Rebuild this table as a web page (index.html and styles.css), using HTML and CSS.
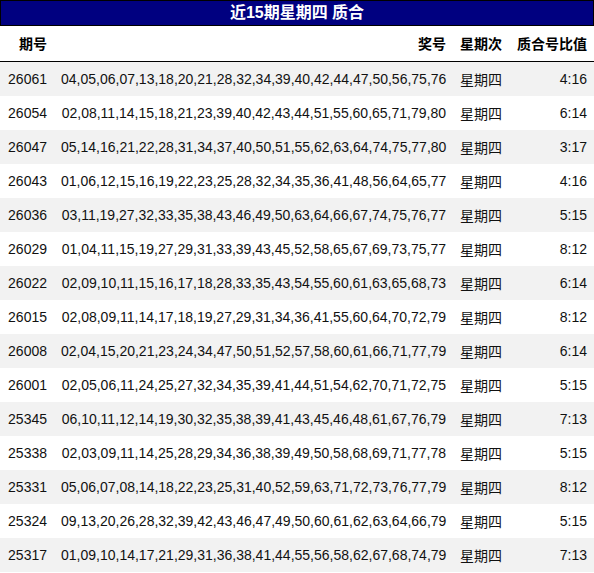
FILE: index.html
```html
<!DOCTYPE html>
<html lang="zh">
<head>
<meta charset="utf-8">
<title>近15期星期四 质合</title>
<link rel="stylesheet" href="styles.css">
</head>
<body>
<div class="title">近15期星期四 质合</div>
<table class="grid">
<colgroup><col class="c1"><col class="c2"><col class="c3"><col class="c4"></colgroup>
<thead>
<tr><th>期号</th><th>奖号</th><th>星期次</th><th>质合号比值</th></tr>
</thead>
<tbody>
<tr><td>26061</td><td>04,05,06,07,13,18,20,21,28,32,34,39,40,42,44,47,50,56,75,76</td><td class="wd">星期四</td><td>4:16</td></tr>
<tr><td>26054</td><td>02,08,11,14,15,18,21,23,39,40,42,43,44,51,55,60,65,71,79,80</td><td class="wd">星期四</td><td>6:14</td></tr>
<tr><td>26047</td><td>05,14,16,21,22,28,31,34,37,40,50,51,55,62,63,64,74,75,77,80</td><td class="wd">星期四</td><td>3:17</td></tr>
<tr><td>26043</td><td>01,06,12,15,16,19,22,23,25,28,32,34,35,36,41,48,56,64,65,77</td><td class="wd">星期四</td><td>4:16</td></tr>
<tr><td>26036</td><td>03,11,19,27,32,33,35,38,43,46,49,50,63,64,66,67,74,75,76,77</td><td class="wd">星期四</td><td>5:15</td></tr>
<tr><td>26029</td><td>01,04,11,15,19,27,29,31,33,39,43,45,52,58,65,67,69,73,75,77</td><td class="wd">星期四</td><td>8:12</td></tr>
<tr><td>26022</td><td>02,09,10,11,15,16,17,18,28,33,35,43,54,55,60,61,63,65,68,73</td><td class="wd">星期四</td><td>6:14</td></tr>
<tr><td>26015</td><td>02,08,09,11,14,17,18,19,27,29,31,34,36,41,55,60,64,70,72,79</td><td class="wd">星期四</td><td>8:12</td></tr>
<tr><td>26008</td><td>02,04,15,20,21,23,24,34,47,50,51,52,57,58,60,61,66,71,77,79</td><td class="wd">星期四</td><td>6:14</td></tr>
<tr><td>26001</td><td>02,05,06,11,24,25,27,32,34,35,39,41,44,51,54,62,70,71,72,75</td><td class="wd">星期四</td><td>5:15</td></tr>
<tr><td>25345</td><td>06,10,11,12,14,19,30,32,35,38,39,41,43,45,46,48,61,67,76,79</td><td class="wd">星期四</td><td>7:13</td></tr>
<tr><td>25338</td><td>02,03,09,11,14,25,28,29,34,36,38,39,49,50,58,68,69,71,77,78</td><td class="wd">星期四</td><td>5:15</td></tr>
<tr><td>25331</td><td>05,06,07,08,14,18,22,23,25,31,40,52,59,63,71,72,73,76,77,79</td><td class="wd">星期四</td><td>8:12</td></tr>
<tr><td>25324</td><td>09,13,20,26,28,32,39,42,43,46,47,49,50,60,61,62,63,64,66,79</td><td class="wd">星期四</td><td>5:15</td></tr>
<tr><td>25317</td><td>01,09,10,14,17,21,29,31,36,38,41,44,55,56,58,62,67,68,74,79</td><td class="wd">星期四</td><td>7:13</td></tr>
</tbody>
</table>
</body>
</html>
```
FILE: styles.css
```css
html, body {
  margin: 0;
  padding: 0;
  background: #ffffff;
}
body {
  width: 594px;
  font-family: "Liberation Sans", Arial, "Noto Sans CJK SC", sans-serif;
  font-size: 14px;
  line-height: 16px;
  color: #111111;
}
.title {
  height: 24px;
  line-height: 24px;
  border: 1px solid #000000;
  background: #000080;
  color: #ffffff;
  font-family: "Liberation Sans", "Noto Sans CJK SC", sans-serif;
  font-weight: bold;
  font-size: 16px;
  text-align: center;
}
.grid {
  width: 594px;
  border-collapse: collapse;
  table-layout: fixed;
}
.c1 { width: 54px; }
.c2 { width: 399px; }
.c3 { width: 56px; }
.c4 { width: 85px; }
.grid th, .grid td {
  padding: 0 7px;
  text-align: right;
  white-space: nowrap;
}
.grid th {
  height: 35px;
  font-weight: bold;
  border-bottom: 1px solid #000000;
  color: #000000;
}
.grid td {
  height: 34px;
}
.grid td.wd {
  text-align: left;
  height: 32px;
  padding-top: 2px;
}
.grid tbody tr:nth-child(odd) {
  background: #f2f2f2;
}
```
